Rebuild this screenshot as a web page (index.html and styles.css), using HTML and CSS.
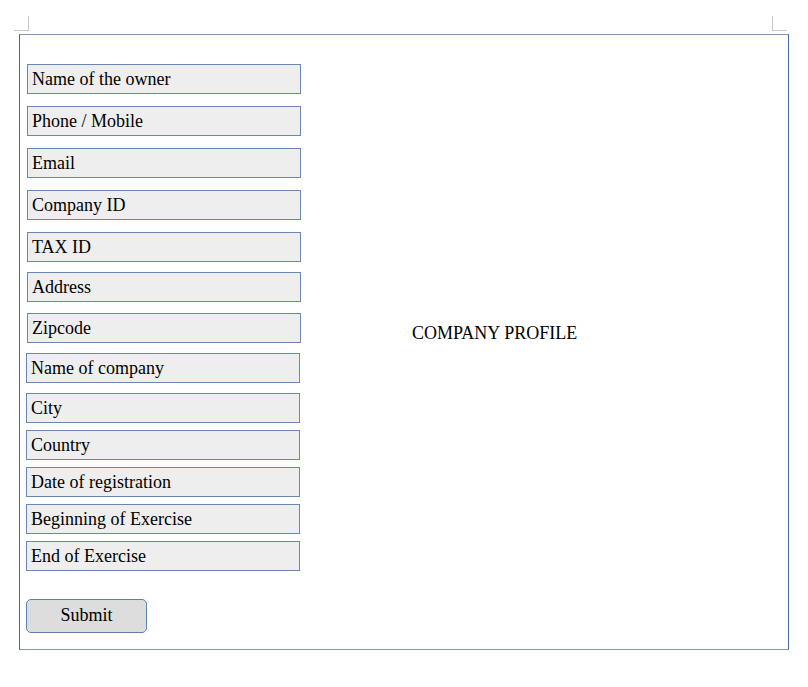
FILE: index.html
```html
<!DOCTYPE html>
<html>
<head>
<meta charset="utf-8">
<link rel="stylesheet" href="styles.css">
</head>
<body>
<div class="mark mark-left"></div>
<div class="mark mark-right"></div>
<div class="page">
  <form class="form">
    <div class="group group-a">
      <div class="field">Name of the owner</div>
      <div class="field">Phone / Mobile</div>
      <div class="field">Email</div>
      <div class="field">Company ID</div>
    </div>
    <div class="group group-b">
      <div class="field">TAX ID</div>
      <div class="field">Address</div>
    </div>
    <div class="group group-b2">
      <div class="field">Zipcode</div>
      <div class="field shift">Name of company</div>
      <div class="field shift">City</div>
    </div>
    <div class="group group-c">
      <div class="field shift">Country</div>
      <div class="field shift">Date of registration</div>
      <div class="field shift">Beginning of Exercise</div>
      <div class="field shift">End of Exercise</div>
    </div>
    <div class="button">Submit</div>
  </form>
  <div class="title">COMPANY PROFILE</div>
</div>
</body>
</html>
```
FILE: styles.css
```css
html, body {
  margin: 0;
  padding: 0;
  background: #ffffff;
}
body {
  font-family: "Liberation Serif", "Times New Roman", serif;
  font-size: 18px;
  color: #000000;
  position: relative;
  width: 808px;
  height: 687px;
}
.mark {
  position: absolute;
  top: 16px;
  width: 14px;
  height: 14px;
  border-color: #c8c8c8;
  border-style: solid;
  border-width: 0;
}
.mark-left {
  left: 14px;
  border-right-width: 1px;
  border-bottom-width: 1px;
}
.mark-right {
  left: 772px;
  border-left-width: 1px;
  border-bottom-width: 1px;
}
.page {
  box-sizing: border-box;
  margin: 34px 0 0 19px;
  width: 770px;
  height: 616px;
  border-left: 1px solid #46679a;
  border-right: 1px solid #46679a;
  border-top: 1px solid #8196b6;
  border-bottom: 1px solid #8196b6;
  display: flex;
  align-items: flex-start;
  padding: 29px 0 0 6px;
}
.form {
  display: flex;
  flex-direction: column;
  width: 275px;
  margin: 0;
}
.group {
  display: flex;
  flex-direction: column;
  margin-left: 1px;
}
.group-a {
  gap: 12px;
}
.group-b {
  gap: 10px;
  margin-top: 12px;
}
.group-b2 {
  gap: 10px;
  margin-top: 11px;
}
.group-c {
  gap: 7px;
  margin-top: 7px;
}
.shift {
  margin-left: -1px;
}
.field {
  box-sizing: border-box;
  width: 274px;
  height: 30px;
  background: #eeeeee;
  border: 1px solid #6a87b4;
  padding: 0 4px;
  line-height: 28px;
  white-space: nowrap;
}
.button {
  box-sizing: border-box;
  width: 121px;
  height: 34px;
  margin-top: 28px;
  background: #dddddd;
  border: 1px solid #5f7fb0;
  border-radius: 5px;
  text-align: center;
  line-height: 31px;
}
.title {
  margin: 259px 0 0 111px;
  line-height: 20px;
}
```
